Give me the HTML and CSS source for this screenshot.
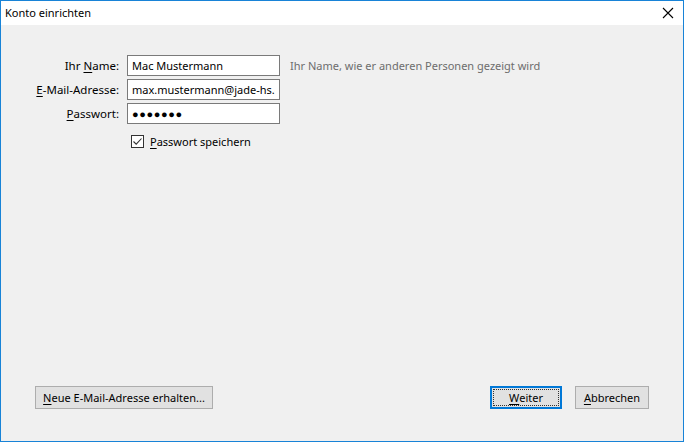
FILE: index.html
```html
<!DOCTYPE html>
<html lang="de">

<head>
    <meta charset="UTF-8">
    <meta name="viewport" content="width=device-width, initial-scale=1.0">
    <title>Konto einrichten</title>
    <link rel="stylesheet" href="styles.css">
</head>

<body>

    <div class="window">
        <div class="titlebar">
            <span class="title">Konto einrichten</span>
            <svg class="close" width="12" height="12" viewBox="0 0 12 12">
                <path d="M1 1 L11 11 M11 1 L1 11" stroke="#000" stroke-width="1.1" fill="none" />
            </svg>
        </div>

        <div class="content">
            <div class="form">
                <label class="label" for="name">Ihr <u>N</u>ame:</label>
                <input id="name" class="field" type="text" value="Mac Mustermann">
                <span class="hint">Ihr Name, wie er anderen Personen gezeigt wird</span>

                <label class="label" for="email"><u>E</u>-Mail-Adresse:</label>
                <input id="email" class="field" type="text" value="max.mustermann@jade-hs.de">
                <span></span>

                <label class="label" for="pass"><u>P</u>asswort:</label>
                <input id="pass" class="field dots" type="text" value="●●●●●●●">
                <span></span>

                <span></span>
                <label class="check-row">
                    <span class="checkbox">
                        <svg width="11" height="11" viewBox="0 0 11 11">
                            <path d="M1.5 5.5 L4.2 8.2 L9.5 2.5" stroke="#333" stroke-width="1.1" fill="none" />
                        </svg>
                    </span>
                    <span><u>P</u>asswort speichern</span>
                </label>
                <span></span>
            </div>

            <div class="footer">
                <button class="btn btn-wide"><u>N</u>eue E-Mail-Adresse erhalten...</button>
                <div class="spacer"></div>
                <button class="btn btn-default"><span class="focus"><u>W</u>eiter</span></button>
                <button class="btn"><u>A</u>bbrechen</button>
            </div>
        </div>
    </div>

</body>

</html>
```

FILE: styles.css
```css
/* General Body Styling */
body {
    margin: 0;
    padding: 0;
    font-family: 'Noto Sans', 'Open Sans', sans-serif;
    font-size: 11px;
    color: #000000;
    background: #f0f0f0;
}

u {
    text-decoration-thickness: 1px;
    text-underline-offset: 2px;
}

/* Window Frame */
.window {
    width: 684px;
    height: 442px;
    box-sizing: border-box;
    border: 1px solid #1883d7;
    display: flex;
    flex-direction: column;
    background-color: #f0f0f0;
}

.titlebar {
    height: 24px;
    background-color: #ffffff;
    display: flex;
    align-items: center;
    justify-content: space-between;
    padding: 0 9px 0 4px;
}

.title {
    font-size: 11px;
    margin-top: -1px;
}

.close {
    margin-top: -1px;
}

/* Content Area */
.content {
    flex: 1;
    display: flex;
    flex-direction: column;
    padding-top: 30px;
}

.form {
    display: grid;
    grid-template-columns: 118px 153px auto;
    grid-auto-rows: 21px;
    column-gap: 8px;
    row-gap: 3px;
    align-items: center;
}

.label {
    text-align: right;
    font-size: 11.5px;
}

.field {
    box-sizing: border-box;
    width: 153px;
    height: 21px;
    margin: 0;
    padding: 0 4px;
    border: 1px solid #7a7a7a;
    background: #ffffff;
    font-family: inherit;
    font-size: 11px;
    color: #000000;
    outline: none;
}

.dots {
    font-size: 11px;
    letter-spacing: 0.6px;
}

.hint {
    color: #6d6d6d;
    margin-left: 2px;
}

.check-row {
    display: flex;
    align-items: center;
    gap: 6px;
    margin-left: 4px;
    margin-top: 8px;
}

.checkbox {
    width: 11px;
    height: 11px;
    border: 1px solid #333333;
    background: #ffffff;
    display: flex;
}

/* Buttons */
.footer {
    margin-top: auto;
    display: flex;
    align-items: center;
    gap: 13px;
    padding: 0 34px 32px 34px;
}

.spacer {
    flex: 1;
}

.btn {
    box-sizing: border-box;
    height: 23px;
    width: 74px;
    margin: 0;
    padding: 0;
    border: 1px solid #adadad;
    background: #e1e1e1;
    font-family: inherit;
    font-size: 11px;
    color: #000000;
}

.btn-wide {
    width: 178px;
}

.btn-default {
    width: 72px;
    border: 2px solid #0078d7;
    padding: 1px;
}

.focus {
    display: flex;
    align-items: center;
    justify-content: center;
    height: 100%;
    box-sizing: border-box;
    border: 1px dotted #333333;
}
```
